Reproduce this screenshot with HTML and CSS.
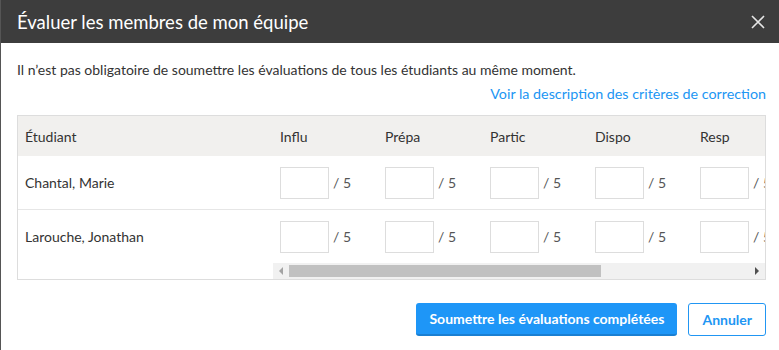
FILE: index.html
```html
<html lang="fr">
<head>
    <meta charset="UTF-8">
    <meta name="viewport" content="width=device-width, initial-scale=1.0">
    <title>Évaluer les membres de mon équipe</title>
    <link rel="stylesheet" href="styles.css">
</head>
<body>
    <div class="modal">
        <header class="modal-head">
            <h2>Évaluer les membres de mon équipe</h2>
            <button class="close" aria-label="Fermer">
                <svg width="14" height="14" viewBox="0 0 14 14">
                    <path d="M1 1 L13 13 M13 1 L1 13" stroke="#e6e6e6" stroke-width="1.6" fill="none"/>
                </svg>
            </button>
        </header>

        <div class="modal-body">
            <p class="note">Il n’est pas obligatoire de soumettre les évaluations de tous les étudiants au même moment.</p>
            <div class="criteria"><a href="#">Voir la description des critères de correction</a></div>

            <div class="grid">
                <div class="fixed-col">
                    <div class="cell head">Étudiant</div>
                    <div class="cell row">Chantal, Marie</div>
                    <div class="cell row last">Larouche, Jonathan</div>
                    <div class="cell spacer"></div>
                </div>
                <div class="scroll-col">
                    <div class="scroll-view">
                        <div class="line head">
                            <div class="col">Influ</div>
                            <div class="col">Prépa</div>
                            <div class="col">Partic</div>
                            <div class="col">Dispo</div>
                            <div class="col">Resp</div>
                        </div>
                        <div class="line row" id="row-1"></div>
                        <div class="line row last" id="row-2"></div>
                    </div>
                    <div class="hscroll">
                        <span class="arrow left"></span>
                        <div class="track"><div class="thumb"></div></div>
                        <span class="arrow right"></span>
                    </div>
                </div>
            </div>
        </div>

        <footer class="modal-foot">
            <button class="btn primary">Soumettre les évaluations complétées</button>
            <button class="btn outline">Annuler</button>
        </footer>
    </div>

    <script>
        // same 5 score fields for each student
        ['row-1', 'row-2'].forEach(id => {
            const row = document.getElementById(id);
            for (let i = 0; i < 5; i++) {
                row.innerHTML += `
                    <div class="col"><input type="text" class="score"><span class="max">/ 5</span></div>
                `;
            }
        });
    </script>
</body>
</html>
```

FILE: styles.css
```css
* {
    margin: 0;
    padding: 0;
    box-sizing: border-box;
}

body {
    font-family: 'Lato', 'Noto Sans', sans-serif;
    color: #333;
    background-color: #fff;
}

.modal {
    width: 779px;
    height: 350px;
    border-left: 1px solid #555;
    display: flex;
    flex-direction: column;
}

.modal-head {
    height: 43px;
    background-color: #3d3d3d;
    display: flex;
    align-items: center;
    justify-content: space-between;
    padding: 0 14px 0 16px;
}

.modal-head h2 {
    color: #fff;
    font-weight: normal;
    font-size: 18.5px;
}

.close {
    background: none;
    border: none;
    width: 14px;
    height: 14px;
    display: flex;
    cursor: pointer;
}

.modal-body {
    padding: 18px 13px 0 16px;
    font-size: 14px;
}

.note {
    line-height: 18px;
}

.criteria {
    text-align: right;
    margin-top: 6px;
    line-height: 18px;
}

.criteria a {
    color: #2196f3;
    text-decoration: none;
    font-size: 14.3px;
}

.grid {
    margin-top: 12px;
    border: 1px solid #ddd;
    display: flex;
}

.fixed-col {
    width: 255px;
    flex-shrink: 0;
}

.cell {
    padding-left: 7px;
    display: flex;
    align-items: center;
}

.head {
    height: 40px;
    background-color: #f1f0ee;
}

.row {
    height: 54px;
    border-bottom: 1px solid #e6e6e6;
}

.row.last {
    height: 53px;
    border-bottom: none;
}

.spacer {
    height: 16px;
}

.scroll-col {
    flex: 1;
    overflow: hidden;
}

.scroll-view {
    overflow: hidden;
}

.line {
    display: flex;
}

.col {
    width: 105px;
    flex-shrink: 0;
    padding-left: 7px;
    display: flex;
    align-items: center;
}

.score {
    width: 49px;
    height: 32px;
    border: 1px solid #ddd;
    outline: none;
}

.max {
    margin-left: 4px;
    color: #555;
    white-space: nowrap;
}

.hscroll {
    height: 16px;
    background-color: #f1f1f1;
    display: flex;
    align-items: center;
}

.arrow {
    width: 0;
    height: 0;
    border-top: 4px solid transparent;
    border-bottom: 4px solid transparent;
    margin: 0 6px;
}

.arrow.left {
    border-right: 4px solid #a3a3a3;
}

.arrow.right {
    border-left: 4px solid #505050;
}

.track {
    flex: 1;
    height: 100%;
    padding: 2px 0;
}

.thumb {
    width: 312px;
    height: 100%;
    background-color: #c1c1c1;
}

.modal-foot {
    margin-top: auto;
    padding: 0 13px 14px 0;
    display: flex;
    justify-content: flex-end;
    gap: 11px;
}

.btn {
    height: 33px;
    font-family: 'Lato', 'Noto Sans', sans-serif;
    font-size: 14px;
    font-weight: bold;
    border-radius: 3px;
    padding: 0 13px;
    cursor: pointer;
}

.primary {
    background-color: #1e96f7;
    color: #fff;
    border: none;
    border-bottom: 2px solid #1a7fd2;
}

.outline {
    background-color: #fff;
    color: #2196f3;
    border: 1px solid #2196f3;
}
```
